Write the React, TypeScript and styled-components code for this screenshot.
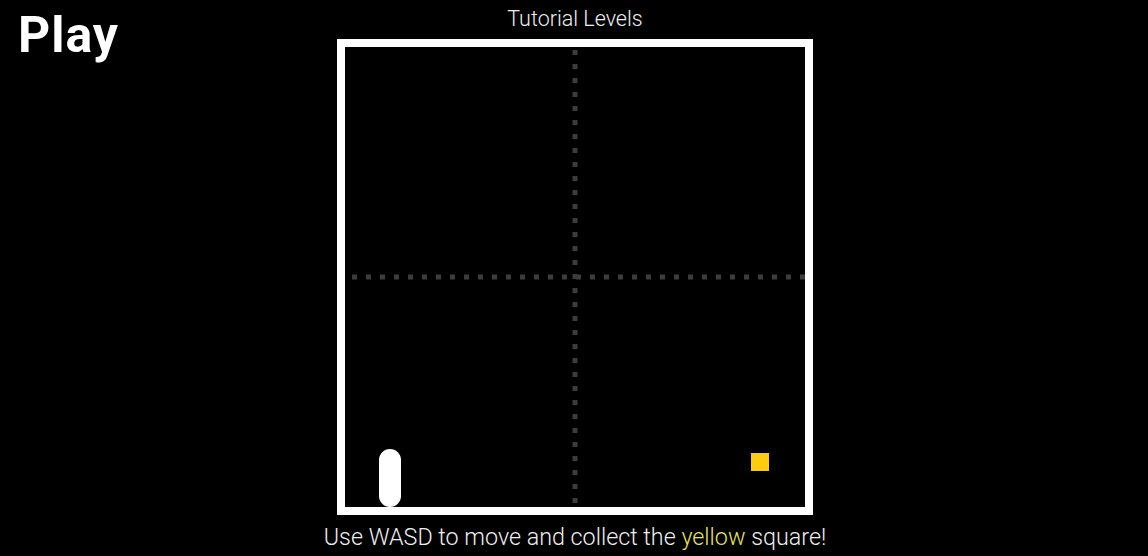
import styled, { createGlobalStyle } from "styled-components";

const GlobalStyle = createGlobalStyle`
    html, body {
        margin: 0;
        padding: 0;
        background: #000;
        font-family: Roboto, "Noto Sans", sans-serif;
        color: #fff;
    }
`

const BOARD = 460;

export default function App() {
    return (
        <>
            <GlobalStyle />
            <Page>
                <Heading>Play</Heading>
                <Center>
                    <Title>Tutorial Levels</Title>
                    <Board>
                        <Grid width={BOARD} height={BOARD} viewBox={`0 0 ${BOARD} ${BOARD}`}>
                            <line x1={BOARD / 2} y1={3} x2={BOARD / 2} y2={BOARD} stroke="#3d3d3d" strokeWidth={5} strokeDasharray="5 9" />
                            <line x1={7} y1={BOARD / 2} x2={BOARD} y2={BOARD / 2} stroke="#3d3d3d" strokeWidth={5} strokeDasharray="5 9" />
                        </Grid>
                        <Player />
                        <Goal />
                    </Board>
                    <Hint>
                        Use WASD to move and collect the <Yellow>yellow</Yellow> square!
                    </Hint>
                </Center>
                <div />
            </Page>
        </>
    )
}

const Page = styled.div`
    display: grid;
    grid-template-columns: 1fr auto 1fr;
    height: 556px;
    overflow: hidden;
`

const Heading = styled.h1`
    margin: 10px 0 0 18px;
    font-size: 50px;
    line-height: 50px;
    font-weight: 700;
    letter-spacing: 1px;
`

const Center = styled.main`
    display: flex;
    flex-direction: column;
    align-items: center;
    padding-left: 2px;
`

const Title = styled.div`
    margin-top: 7px;
    font-size: 21.5px;
    line-height: 24px;
    font-weight: 300;
    color: #eee;
`

const Board = styled.div`
    position: relative;
    margin-top: 8px;
    width: ${BOARD}px;
    height: ${BOARD}px;
    border: 8px solid #fff;
    background: #000;
`

const Grid = styled.svg`
    position: absolute;
    inset: 0;
    display: block;
`

const Player = styled.div`
    position: absolute;
    left: 34px;
    top: 402px;
    width: 22px;
    height: 58px;
    border-radius: 11px;
    background: #fff;
`

const Goal = styled.div`
    position: absolute;
    left: 406px;
    top: 406px;
    width: 18px;
    height: 18px;
    background: #fdcb0f;
`

const Hint = styled.div`
    margin-top: 8px;
    font-size: 23.3px;
    line-height: 28px;
    font-weight: 300;
    color: #eee;
    white-space: nowrap;
`

const Yellow = styled.span`
    color: #e3e35c;
`
